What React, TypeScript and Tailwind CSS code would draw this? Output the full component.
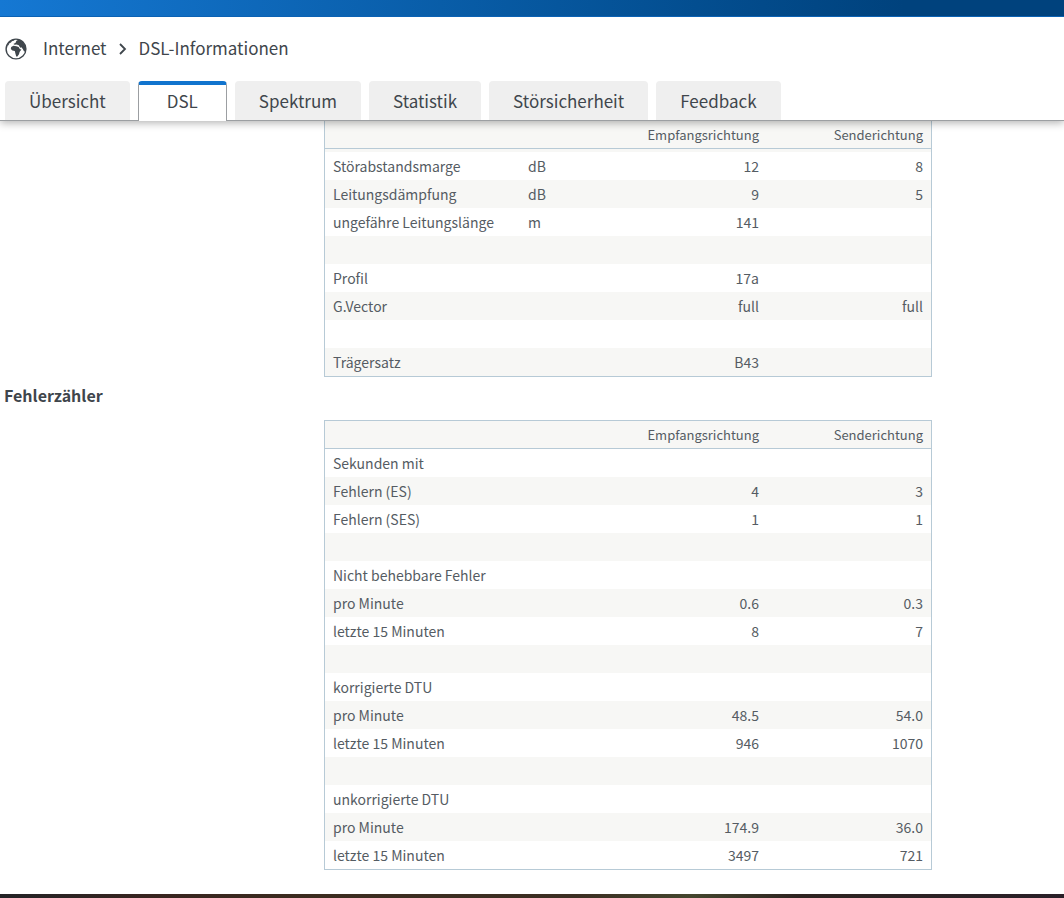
import clsx from 'clsx';

interface Row {
  label?: string;
  unit?: string;
  down?: string;
  up?: string;
}

interface ValueTableProps {
  name: string;
  rows: Row[];
  attached?: boolean;
}

const tabs = ['Übersicht', 'DSL', 'Spektrum', 'Statistik', 'Störsicherheit', 'Feedback'];

const lineRows: Row[] = [
  { label: 'Störabstandsmarge', unit: 'dB', down: '12', up: '8' },
  { label: 'Leitungsdämpfung', unit: 'dB', down: '9', up: '5' },
  { label: 'ungefähre Leitungslänge', unit: 'm', down: '141' },
  {},
  { label: 'Profil', down: '17a' },
  { label: 'G.Vector', down: 'full', up: 'full' },
  {},
  { label: 'Trägersatz', down: 'B43' },
];

const errorRows: Row[] = [
  { label: 'Sekunden mit' },
  { label: 'Fehlern (ES)', down: '4', up: '3' },
  { label: 'Fehlern (SES)', down: '1', up: '1' },
  {},
  { label: 'Nicht behebbare Fehler' },
  { label: 'pro Minute', down: '0.6', up: '0.3' },
  { label: 'letzte 15 Minuten', down: '8', up: '7' },
  {},
  { label: 'korrigierte DTU' },
  { label: 'pro Minute', down: '48.5', up: '54.0' },
  { label: 'letzte 15 Minuten', down: '946', up: '1070' },
  {},
  { label: 'unkorrigierte DTU' },
  { label: 'pro Minute', down: '174.9', up: '36.0' },
  { label: 'letzte 15 Minuten', down: '3497', up: '721' },
];

function GlobeIcon() {
  return (
    <svg viewBox="0 0 22 22" className="size-[22px] text-[#3f464c]" fill="currentColor" aria-hidden="true">
      <circle cx="11" cy="11" r="9.9" fill="none" stroke="currentColor" strokeWidth="1.4" />
      <path d="M2 8.2 3.8 4.4 7.4 1.8 10 1.4 8.6 2.8 6.8 3.2 6 4.6 4.4 5.2 3.4 7.2Z" />
      <path d="M11.4 2.8 14 1.6 18 4 20.6 8.4 20.8 12 19.2 13.8 17.8 11 16.4 9.2 15.2 9.8 13.8 7.2 11.6 6.6 9.6 6.8 8.4 6 10.6 4.8Z" />
      <path d="M6.2 9 8.4 7.8 11.4 8.2 13.6 9 15 11.2 16.4 11.6 14.6 14 14 16.2 12.4 18.6 11.2 18.4 10.4 15.6 9.8 13 7.4 12.6 5.8 11Z" />
    </svg>
  );
}

function ValueTable({ name, rows, attached }: ValueTableProps) {
  return (
    <table
      aria-label={name}
      className={clsx(
        'w-full max-w-[608px] table-fixed border-separate border-spacing-0 border border-[#b7cad6] text-sm leading-5 text-[#555c63]',
        attached && 'border-t-0'
      )}
    >
      <colgroup>
        <col className="w-[195px]" />
        <col className="w-20" />
        <col />
        <col className="w-[164px]" />
      </colgroup>
      <thead className="bg-[#f7f7f5] text-[13px]">
        <tr className="h-7">
          <td className="border-b border-[#b7cad6]" />
          <td className="border-b border-[#b7cad6]" />
          <th scope="col" className="border-b border-[#b7cad6] px-2 text-right font-normal">Empfangsrichtung</th>
          <th scope="col" className="border-b border-[#b7cad6] px-2 text-right font-normal">Senderichtung</th>
        </tr>
        {attached && (
          <tr className="h-[3px]">
            <td colSpan={4} />
          </tr>
        )}
      </thead>
      <tbody>
        {rows.map((row, i) => (
          <tr key={i} className="h-7 even:bg-[#f7f7f5]">
            <td className="px-2 whitespace-nowrap">{row.label}</td>
            <td className="px-2">{row.unit}</td>
            <td className="px-2 text-right">{row.down}</td>
            <td className="px-2 text-right">{row.up}</td>
          </tr>
        ))}
      </tbody>
    </table>
  );
}

export default function App() {
  return (
    <div className="flex min-h-screen flex-col bg-white font-['Noto_Sans_CJK_SC','Source_Sans_Pro',sans-serif] text-[#3f464c]">
      <header className="relative shadow-[0_2px_8px_rgba(0,0,0,0.3)]">
        <div className="h-[17px] border-b border-[#0b62b4] bg-linear-to-r from-[#1578d3] to-[#00427d] to-85%" />
        <nav aria-label="Pfad" className="flex h-16 items-center pl-[5px] text-[17px] leading-6">
          <GlobeIcon />
          <a href="#internet" className="ml-4 pb-0.5">Internet</a>
          <svg viewBox="0 0 8 12" className="mx-3 h-3 w-2" fill="none" stroke="currentColor" strokeWidth="1.8" aria-hidden="true">
            <path d="M1 1 6 6 1 11" />
          </svg>
          <a href="#dsl" className="pb-0.5">DSL-Informationen</a>
        </nav>
        <div role="tablist" className="flex h-10 gap-2 border-b border-[#9c9fa2] pl-[5px]">
          {tabs.map((tab) => (
            <button
              key={tab}
              type="button"
              role="tab"
              aria-selected={tab === 'DSL'}
              className={clsx(
                'rounded-t-sm text-[17px] leading-6',
                tab === 'DSL'
                  ? '-mb-px border-x border-t-4 border-x-[#9c9fa2] border-t-[#1174ce] bg-white px-7 pb-1'
                  : 'bg-[#efefef] px-6'
              )}
            >
              {tab}
            </button>
          ))}
        </div>
      </header>

      <main className="grow pb-6">
        <div className="pl-[324px]">
          <ValueTable name="Leitungswerte" rows={lineRows} attached />
        </div>
        <h2 className="mt-1 pl-1 text-base leading-7 font-bold">Fehlerzähler</h2>
        <div className="mt-[11px] pl-[324px]">
          <ValueTable name="Fehlerzähler" rows={errorRows} />
        </div>
      </main>

      <footer className="h-1 bg-[linear-gradient(to_right,#232326,#38241f_14%,#3c2c1f_30%,#3c2e22_54%,#44462e_65%,#2e2320_75%,#2a2028)]" />
    </div>
  );
}
